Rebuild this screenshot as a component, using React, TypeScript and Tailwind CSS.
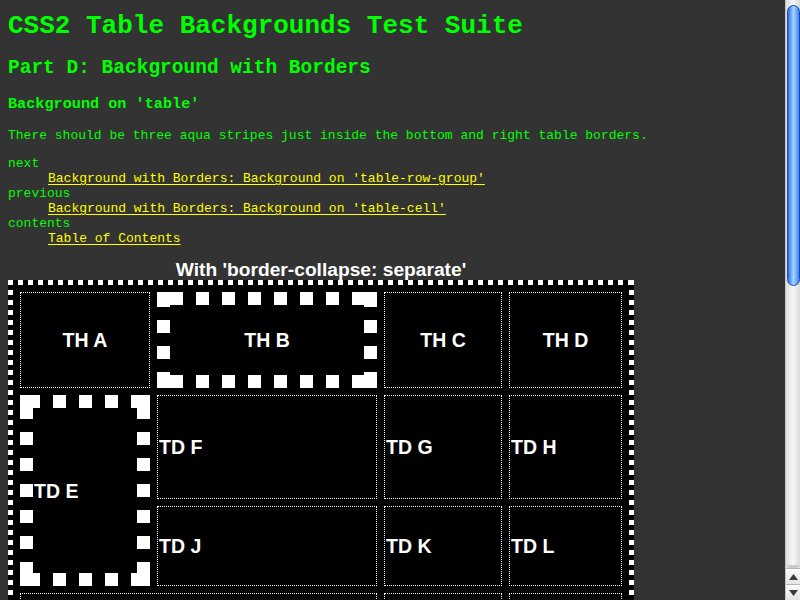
import React from "react";

type CellProps = { children?: React.ReactNode; className?: string; head?: boolean };

// ordinary cells: 1px dotted white border, 1px padding
function Cell({ children, className = "", head = false }: CellProps) {
  return (
    <div
      className={`flex items-center border border-dotted border-white p-px ${
        head ? "justify-center" : "justify-start"
      } ${className}`}
    >
      {children}
    </div>
  );
}

const links = [
  { term: "next", label: "Background with Borders: Background on 'table-row-group'" },
  { term: "previous", label: "Background with Borders: Background on 'table-cell'" },
  { term: "contents", label: "Table of Contents" },
];

function Scrollbar() {
  return (
    <div className="flex h-[600px] w-[15px] shrink-0 flex-col border-l border-[#c4c4c4] bg-linear-to-r from-[#dedede] via-[#f7f7f7] to-[#d9d9d9]">
      <div className="ml-px mt-[5px] h-[281px] w-[13px] rounded-full border border-[#1a47b4] bg-linear-to-r from-[#2a6de4] via-[#a6d4ff] to-[#3d84ec]" />
      <div className="flex-1" />
      <div className="mx-px h-[3px] rounded-b-full bg-[#c9c9c9]" />
      <div className="flex h-[16px] items-center justify-center border-t border-[#b4b4b4] bg-linear-to-b from-[#fbfbfb] to-[#e4e4e4]">
        <svg width="9" height="6" viewBox="0 0 9 6">
          <path d="M4.5 0L9 6H0z" fill="#3a3a3a" />
        </svg>
      </div>
      <div className="flex h-[16px] items-center justify-center border-t border-[#b4b4b4] bg-linear-to-b from-[#fbfbfb] to-[#e4e4e4]">
        <svg width="9" height="6" viewBox="0 0 9 6">
          <path d="M0 0H9L4.5 6z" fill="#3a3a3a" />
        </svg>
      </div>
    </div>
  );
}

export default function App() {
  return (
    <div className="flex h-[600px] w-[800px] overflow-hidden bg-[#333333]">
      <div className="min-w-0 flex-1 overflow-hidden pl-[8px] font-['Liberation_Mono',monospace] text-[#00ff00]">
        <h1 className="mt-[11px] text-[26px] font-bold leading-[30px]">CSS2 Table Backgrounds Test Suite</h1>
        <h2 className="mt-[16px] text-[19.5px] font-bold leading-[22px]">Part D: Background with Borders</h2>
        <h3 className="mt-[17px] text-[15.2px] font-bold leading-[17px]">Background on 'table'</h3>
        <p className="mt-[15px] text-[13px] leading-[15px]">
          There should be three aqua stripes just inside the bottom and right table borders.
        </p>

        <dl className="mt-[13px] text-[13px] leading-[15px]">
          {links.map((l) => (
            <React.Fragment key={l.term}>
              <dt>{l.term}</dt>
              <dd className="ml-[40px]">
                <a href="#" className="text-[#ffff00] underline underline-offset-2">
                  {l.label}
                </a>
              </dd>
            </React.Fragment>
          ))}
        </dl>

        <div className="mt-[13px] w-[626px] font-['Liberation_Sans',Arial,sans-serif] text-[19.5px] font-bold text-white">
          <div className="text-center text-[19.2px] leading-[21px]">With 'border-collapse: separate'</div>

          {/* table border: 5px square dots drawn with gradients */}
          <div className="bg-black p-[5px] bg-no-repeat [background-image:repeating-linear-gradient(90deg,#fff_0_5px,transparent_5px_10px),repeating-linear-gradient(90deg,#fff_0_5px,transparent_5px_10px),repeating-linear-gradient(180deg,#fff_0_5px,transparent_5px_10px),repeating-linear-gradient(180deg,#fff_0_5px,transparent_5px_10px)] [background-position:left_top,left_bottom,left_top,right_top] [background-size:100%_5px,100%_5px,5px_100%,5px_100%]">
            <div className="grid grid-cols-[130px_220px_118px_113px] grid-rows-[96px_104px_80px_80px] gap-[7px] bg-black p-[7px] leading-[22px]">
              <Cell head>TH A</Cell>
              {/* 13px dotted border */}
              <div className="flex items-center justify-center p-[14px] bg-no-repeat [background-image:linear-gradient(#fff,#fff),linear-gradient(#fff,#fff),linear-gradient(#fff,#fff),linear-gradient(#fff,#fff),repeating-linear-gradient(90deg,transparent_0_13px,#fff_13px_26px),repeating-linear-gradient(90deg,transparent_0_13px,#fff_13px_26px),repeating-linear-gradient(180deg,transparent_0_2px,#fff_2px_15px,transparent_15px_26px),repeating-linear-gradient(180deg,transparent_0_2px,#fff_2px_15px,transparent_15px_26px)] [background-position:left_top,right_top,left_bottom,right_bottom,left_top,left_bottom,left_top,right_top] [background-size:13px_13px,13px_13px,13px_13px,13px_13px,100%_13px,100%_13px,13px_100%,13px_100%]">
                TH B
              </div>
              <Cell head>TH C</Cell>
              <Cell head>TH D</Cell>

              <div className="row-span-2 flex items-center p-[14px] bg-no-repeat [background-image:linear-gradient(#fff,#fff),linear-gradient(#fff,#fff),linear-gradient(#fff,#fff),linear-gradient(#fff,#fff),repeating-linear-gradient(90deg,transparent_0_7px,#fff_7px_20px,transparent_20px_26px),repeating-linear-gradient(90deg,transparent_0_7px,#fff_7px_20px,transparent_20px_26px),repeating-linear-gradient(180deg,transparent_0_11px,#fff_11px_24px,transparent_24px_26px),repeating-linear-gradient(180deg,transparent_0_11px,#fff_11px_24px,transparent_24px_26px)] [background-position:left_top,right_top,left_bottom,right_bottom,left_top,left_bottom,left_top,right_top] [background-size:13px_13px,13px_13px,13px_13px,13px_13px,100%_13px,100%_13px,13px_100%,13px_100%]">
                TD E
              </div>
              <Cell>TD F</Cell>
              <Cell>TD G</Cell>
              <Cell>TD H</Cell>

              <Cell>TD J</Cell>
              <Cell>TD K</Cell>
              <Cell>TD L</Cell>

              <Cell className="col-span-2" />
              <Cell />
              <Cell />
            </div>
          </div>
        </div>
      </div>
      <Scrollbar />
    </div>
  );
}
